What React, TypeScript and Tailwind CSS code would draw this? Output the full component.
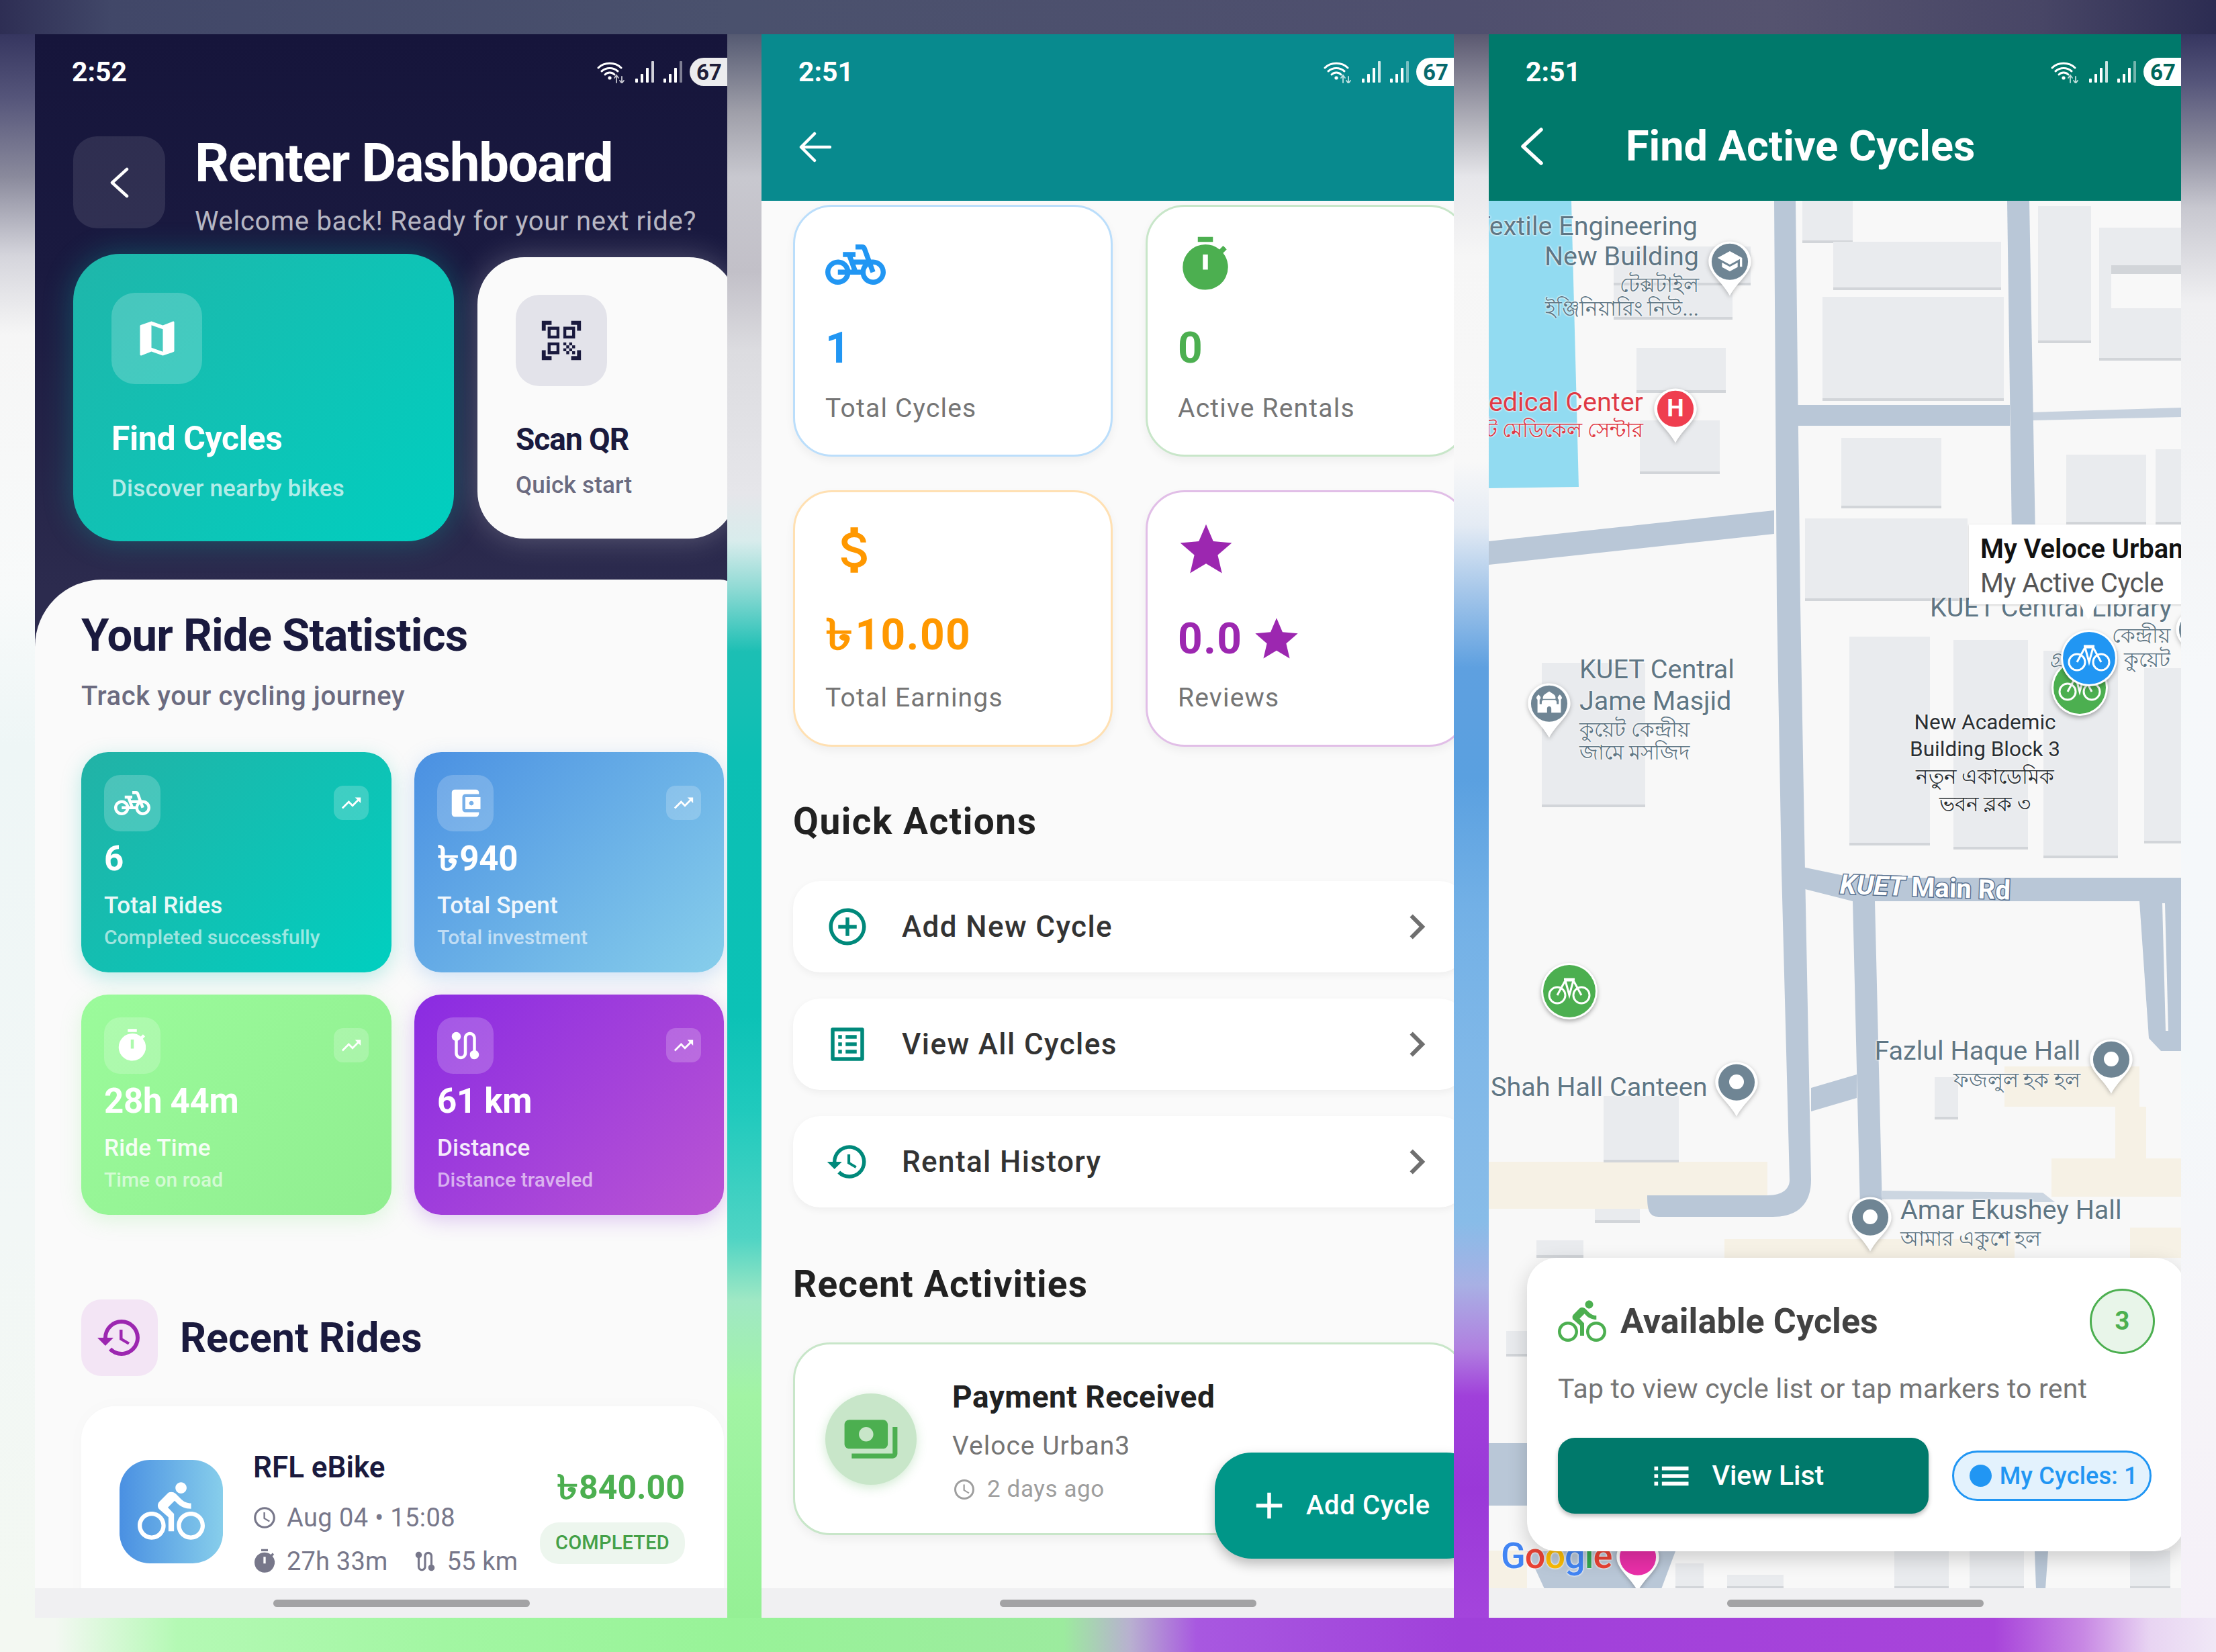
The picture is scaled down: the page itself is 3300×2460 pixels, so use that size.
import React from "react";
import {
  MdAccessTime, MdAccountBalanceWallet, MdAdd, MdAddCircleOutline, MdAttachMoney, MdChevronRight,
  MdDirectionsBike, MdHistory, MdList, MdListAlt, MdMap, MdPayments, MdPedalBike, MdQrCodeScanner,
  MdRoute, MdSchool, MdStar, MdTimer, MdTrendingUp, MdMosque,
} from "react-icons/md";

const Taka = () => <span className="inline-block origin-left scale-x-[1.3] mr-[0.17em]">৳</span>;

const Wifi = () => (
  <svg viewBox="0 0 44 34" className="w-[44px] h-[34px]" fill="none" stroke="white" strokeLinecap="round">
    <path d="M2 11C11 2 27 2 36 11" strokeWidth="3" />
    <path d="M7 16C14 10 24 10 31 16" strokeWidth="3" />
    <path d="M12 21C16 17 22 17 26 21" strokeWidth="3" />
    <circle cx="19" cy="26" r="2.6" fill="white" stroke="none" />
    <path d="M29 33V23M26 26L29 22L32 26" strokeWidth="1.8" opacity="0.75" />
    <path d="M37 24V33M34 30L37 34L40 30" strokeWidth="1.8" opacity="0.75" />
  </svg>
);

const Bars = ({ dim }: { dim?: boolean }) => (
  <svg viewBox="0 0 30 34" className="w-[30px] h-[34px]" fill="white">
    <rect x="1" y="27" width="4" height="6" rx="1" />
    <rect x="9" y="20" width="4" height="13" rx="1" />
    <rect x="17" y="11" width="4" height="22" rx="1" />
    <rect x="25" y="1" width="4" height="32" rx="1" opacity={dim ? 0.45 : 0.8} />
  </svg>
);

const Status = ({ time, pill }: { time: string; pill: string }) => (
  <div className="h-[112px] flex items-center justify-between pl-[55px] shrink-0">
    <span className="text-[41px] font-bold text-white leading-none">{time}</span>
    <div className="flex items-center gap-[12px] -mr-[22px]">
      <Wifi />
      <Bars />
      <Bars dim />
      <div className={`-ml-[2px] w-[78px] h-[42px] rounded-full pl-[10px] flex items-center text-[33px] font-bold leading-none ${pill}`}>67</div>
    </div>
  </div>
);

const Nav = () => (
  <div className="h-[44px] bg-[#f0f0f2] pl-[355px] pt-[17px] shrink-0 relative z-20">
    <div className="w-[382px] h-[11px] rounded-full bg-[#a3a3a5]" />
  </div>
);

const statCards = [
  { Icon: MdPedalBike, value: <>6</>, title: "Total Rides", sub: "Completed successfully", cls: "bg-[linear-gradient(135deg,#22b2a6,#00cfc0)] shadow-[0_8px_30px_rgba(0,190,170,0.25)]" },
  { Icon: MdAccountBalanceWallet, value: <><Taka />940</>, title: "Total Spent", sub: "Total investment", cls: "bg-[linear-gradient(135deg,#4a90e2,#87ceeb)] shadow-[0_8px_30px_rgba(80,150,230,0.25)]" },
  { Icon: MdTimer, value: <>28h 44m</>, title: "Ride Time", sub: "Time on road", cls: "bg-[linear-gradient(135deg,#9bfb9b,#90ee90)] shadow-[0_8px_30px_rgba(140,240,140,0.25)]" },
  { Icon: MdRoute, value: <>61 km</>, title: "Distance", sub: "Distance traveled", cls: "bg-[linear-gradient(135deg,#8a2be2,#ba55d3)] shadow-[0_8px_30px_rgba(140,50,220,0.25)]" },
];

const PhoneOne = () => (
  <div className="w-[1031px] h-[2358px] flex flex-col overflow-hidden shrink-0 bg-[linear-gradient(180deg,#16153b_0%,#1a1a40_15%,#2c2b4e_35%)]">
    <Status time="2:52" pill="bg-[#ececee] text-[#1f1f3a]" />
    <div className="mt-[40px] pl-[57px] flex items-start gap-[44px]">
      <div className="w-[137px] h-[137px] rounded-[35px] bg-white/10 flex items-center justify-center">
        <svg viewBox="0 0 30 46" className="w-[30px] h-[46px]" fill="none" stroke="white" strokeWidth="4.5" strokeLinecap="round" strokeLinejoin="round"><path d="M26 3L4 23L26 43" /></svg>
      </div>
      <div>
        <div className="text-[80px] leading-[80px] font-bold text-white tracking-[-1.5px] whitespace-nowrap">Renter Dashboard</div>
        <div className="mt-[25px] text-[40px] leading-[44px] text-white/70 whitespace-nowrap tracking-[0.7px]">Welcome back! Ready for your next ride?</div>
      </div>
    </div>
    <div className="mt-[26px] pl-[57px] flex items-center gap-[35px]">
      <div className="w-[567px] h-[428px] shrink-0 rounded-[70px] pl-[57px] pt-[58px] bg-[linear-gradient(135deg,#1fb6aa,#00cfc0)] shadow-[0_0_45px_rgba(0,200,180,0.3)]">
        <div className="w-[135px] h-[136px] rounded-[35px] bg-white/20 flex items-center justify-center">
          <MdMap className="text-white text-[68px]" />
        </div>
        <div className="mt-[56px] text-[50px] leading-[50px] font-bold text-white tracking-[-0.4px]">Find Cycles</div>
        <div className="mt-[30px] text-[35px] leading-[40px] font-medium text-white/70 tracking-[0.2px]">Discover nearby bikes</div>
      </div>
      <div className="w-[385px] h-[419px] shrink-0 rounded-[70px] pl-[57px] pt-[56px] bg-[#fafafa] shadow-[0_0_45px_rgba(255,255,255,0.25)]">
        <div className="w-[136px] h-[136px] rounded-[35px] bg-[#e3e3ea] flex items-center justify-center">
          <MdQrCodeScanner className="text-[#1a1a3e] text-[70px]" />
        </div>
        <div className="mt-[54px] text-[46px] leading-[50px] font-bold text-[#1a1a3e] tracking-[-1px]">Scan QR</div>
        <div className="mt-[24px] text-[35px] leading-[40px] font-medium text-[#6b6b80] tracking-[0.2px]">Quick start</div>
      </div>
    </div>
    <div className="mt-[57px] w-[1050px] flex-1 min-h-0 overflow-hidden rounded-tl-[100px] rounded-tr-[30px] bg-[#fafafa] pl-[69px] pt-[48px] relative">
      <div className="text-[67px] leading-[70px] font-bold text-[#1a1a3e] tracking-[-0.8px] whitespace-nowrap">Your Ride Statistics</div>
      <div className="mt-[34px] text-[40px] leading-[44px] font-medium text-[#6b6b80] tracking-[0.6px]">Track your cycling journey</div>
      <div className="mt-[61px] grid grid-cols-[462px_461px] auto-rows-[328px] gap-x-[34px] gap-y-[33px]">
        {statCards.map((c) => (
          <div key={c.title} className={`relative rounded-[40px] pl-[34px] pt-[34px] ${c.cls}`}>
            <div className="w-[84px] h-[84px] rounded-[24px] bg-white/20 flex items-center justify-center">
              <c.Icon className="text-white text-[54px]" />
            </div>
            <div className="mt-[16px] text-[51px] leading-[50px] font-bold text-white whitespace-nowrap tracking-[-0.3px]">{c.value}</div>
            <div className="mt-[26px] text-[35px] leading-[38px] font-medium text-white/90 tracking-[0.2px]">{c.title}</div>
            <div className="mt-[12px] text-[30px] leading-[32px] font-medium text-white/60">{c.sub}</div>
            <div className="absolute right-[34px] top-[50px] w-[52px] h-[51px] rounded-[14px] bg-white/20 flex items-center justify-center">
              <MdTrendingUp className="text-white text-[34px]" />
            </div>
          </div>
        ))}
      </div>
      <div className="mt-[126px] flex items-center gap-[33px]">
        <div className="w-[114px] h-[114px] rounded-[30px] bg-[#f3e5f5] flex items-center justify-center">
          <MdHistory className="text-[#9c27b0] text-[72px]" />
        </div>
        <div className="text-[61px] leading-[70px] font-bold text-[#1a1a3e]">Recent Rides</div>
      </div>
      <div className="mt-[45px] w-[957px] h-[330px] rounded-[50px] bg-white flex items-start pl-[57px] pt-[66px] shadow-[0_0_30px_rgba(0,0,0,0.02)]">
        <div className="mt-[14px] w-[154px] h-[154px] rounded-[45px] flex items-center justify-center bg-[linear-gradient(90deg,#4a90e2,#87ceeb)] shrink-0">
          <MdDirectionsBike className="text-white text-[100px]" />
        </div>
        <div className="ml-[45px] w-[400px]">
          <div className="text-[44px] leading-[50px] font-semibold text-[#1a1a3e]">RFL eBike</div>
          <div className="mt-[28px] flex items-center gap-[16px] text-[38px] leading-[44px] text-[#77778a]">
            <MdAccessTime className="text-[38px] -mx-[2px]" />
            <span className="tracking-[0.4px]">Aug 04 • 15:08</span>
          </div>
          <div className="mt-[21px] flex items-center gap-[16px] text-[38px] leading-[44px] text-[#77778a] whitespace-nowrap">
            <MdTimer className="text-[40px] -mx-[3px]" />
            <span className="tracking-[0.2px]">27h 33m</span>
            <MdRoute className="ml-[20px] text-[38px] -mr-[2px]" />
            <span className="tracking-[0.2px]">55 km</span>
          </div>
        </div>
        <div className="absolute left-[752px] top-[1326px] w-[216px] flex flex-col items-end">
          <div className="text-[50px] leading-[52px] font-bold text-[#4caf50]"><Taka />840.00</div>
          <div className="mt-[26px] w-[216px] h-[62px] rounded-[28px] bg-[#edf6ee] flex items-center justify-center text-[29px] font-medium text-[#43a047] tracking-[0.2px]">COMPLETED</div>
        </div>
      </div>
    </div>
    <Nav />
  </div>
);

const tiles = [
  { border: "border-[#bbdefb]", vm: "mt-[48px]", lm: "mt-[34px]", icon: <MdPedalBike className="text-[#2196f3] text-[90px]" />, value: <span className="text-[#2196f3]">1</span>, label: "Total Cycles" },
  { border: "border-[#c8e6c9]", vm: "mt-[48px]", lm: "mt-[34px]", icon: <MdTimer className="text-[#4caf50] text-[90px] -ml-[4px]" />, value: <span className="text-[#4caf50]">0</span>, label: "Active Rentals" },
  { border: "border-[#ffe0b2]", vm: "mt-[50px]", lm: "mt-[38px]", icon: <MdAttachMoney className="text-[#ff9800] text-[90px]" />, value: <span className="text-[#ff9800]"><Taka />10.00</span>, label: "Total Earnings" },
  { border: "border-[#e1bee7]", vm: "mt-[50px]", lm: "mt-[38px]", icon: <MdStar className="text-[#9c27b0] text-[92px] -ml-[4px]" />, value: <span className="text-[#9c27b0] flex items-center gap-[12px]">0.0 <MdStar className="text-[76px]" /></span>, label: "Reviews" },
];

const actions = [
  { Icon: MdAddCircleOutline, label: "Add New Cycle" },
  { Icon: MdListAlt, label: "View All Cycles" },
  { Icon: MdHistory, label: "Rental History" },
];

const PhoneTwo = () => (
  <div className="relative w-[1031px] h-[2358px] flex flex-col overflow-hidden shrink-0 bg-[#fafafa]">
    <div className="h-[248px] bg-[#088a8e] shrink-0">
      <Status time="2:51" pill="bg-[linear-gradient(90deg,#ffffff_72%,#ffffff99_72%)] text-[#08696c]" />
      <div className="pl-[56px] pt-[33px]">
        <svg viewBox="0 0 48 46" className="w-[48px] h-[46px]" fill="none" stroke="white" strokeWidth="4.5" strokeLinecap="round" strokeLinejoin="round"><path d="M46 23H3M23 3L3 23L23 43" /></svg>
      </div>
    </div>
    <div className="flex-1 min-h-0 pl-[47px] pt-[6px] overflow-hidden">
      <div className="grid grid-cols-[476px_480px] grid-rows-[375px_382px] gap-x-[49px] gap-y-[50px]">
        {tiles.map((t) => (
          <div key={t.label} className={`bg-white border-[3px] rounded-[58px] pl-[45px] pt-[41px] shadow-[0_6px_14px_rgba(0,0,0,0.05)] ${t.border}`}>
            <div className="h-[90px] flex items-center">{t.icon}</div>
            <div className={`${t.vm} h-[64px] text-[64px] leading-[64px] font-bold tracking-[1.5px]`}>{t.value}</div>
            <div className={`${t.lm} text-[39px] leading-[46px] text-[#757575] tracking-[1.2px]`}>{t.label}</div>
          </div>
        ))}
      </div>
      <div className="mt-[81px] text-[55px] leading-[60px] font-bold text-[#212121] tracking-[1.5px]">Quick Actions</div>
      <div className="mt-[59px] flex flex-col gap-[39px]">
        {actions.map((a) => (
          <div key={a.label} className="w-[1003px] h-[136px] rounded-[40px] bg-white flex items-center pl-[48px] pr-[37px] shadow-[0_4px_12px_rgba(0,0,0,0.05)]">
            <a.Icon className="text-[#00897b] text-[66px]" />
            <span className="ml-[48px] flex-1 text-[44px] font-medium text-[#333333] tracking-[1.4px]">{a.label}</span>
            <MdChevronRight className="text-[#6f6f6f] text-[74px]" />
          </div>
        ))}
      </div>
      <div className="mt-[84px] text-[55px] leading-[60px] font-bold text-[#212121] tracking-[1.2px]">Recent Activities</div>
      <div className="mt-[57px] w-[1003px] h-[287px] bg-white border-[3px] border-[#c8e6c9] rounded-[55px] flex items-center pl-[45px] shadow-[0_6px_14px_rgba(0,0,0,0.05)]">
        <div className="w-[136px] h-[136px] rounded-full bg-[#c8e6c9] flex items-center justify-center shadow-[0_4px_16px_rgba(76,175,80,0.25)] shrink-0">
          <MdPayments className="text-[#4caf50] text-[86px]" />
        </div>
        <div className="ml-[53px] pt-[8px]">
          <div className="text-[46px] leading-[52px] font-bold text-[#212121] tracking-[0.5px]">Payment Received</div>
          <div className="mt-[24px] text-[39px] leading-[46px] text-[#757575] tracking-[1px]">Veloce Urban3</div>
          <div className="mt-[20px] flex items-center gap-[16px] text-[35px] leading-[44px] text-[#9e9e9e] tracking-[0.6px]">
            <MdAccessTime className="text-[36px]" />
            2 days ago
          </div>
        </div>
      </div>
    </div>
    <Nav />
    <div className="absolute left-[675px] top-[2112px] w-[400px] h-[158px] rounded-[55px] bg-[#009688] shadow-[0_8px_18px_rgba(0,0,0,0.25)] flex items-center pl-[48px] z-10">
      <MdAdd className="text-white text-[66px]" />
      <span className="ml-[22px] text-[40px] font-medium text-white tracking-[0.6px]">Add Cycle</span>
    </div>
  </div>
);

const Pin = ({ x, y, color, children }: { x: number; y: number; color: string; children?: React.ReactNode }) => (
  <div className="absolute w-[66px] h-[84px]" style={{ left: x - 2217 - 33, top: y - 299 - 31 }}>
    <svg viewBox="0 0 100 127" className="absolute inset-0 w-full h-full drop-shadow-[0_2px_3px_rgba(0,0,0,0.25)]">
      <path d="M50 2C23 2 2 23 2 48C2 74 32 92 50 125C68 92 98 74 98 48C98 23 77 2 50 2Z" fill="white" />
      <circle cx="50" cy="48" r="41" fill={color} />
    </svg>
    <div className="absolute left-0 top-0 w-[66px] h-[62px] flex items-center justify-center text-white">{children}</div>
  </div>
);

const Marker = ({ x, y, color }: { x: number; y: number; color: string }) => (
  <svg viewBox="0 0 88 88" className="absolute w-[88px] h-[88px] drop-shadow-[0_3px_3px_rgba(0,0,0,0.3)]" style={{ left: x - 2217 - 44, top: y - 299 - 44 }}>
    <circle cx="44" cy="44" r="42" fill="white" />
    <circle cx="44" cy="44" r="39" fill={color} />
    <g fill="none" stroke="white" strokeWidth="3">
      <circle cx="26" cy="50" r="12" />
      <circle cx="62" cy="50" r="12" />
      <path d="M26 50L38 28H50L62 50M38 28L44 50L50 28M36 26H52" />
    </g>
  </svg>
);

type LabelT = { x: number; y: number; t: string; a?: "l" | "r" | "c"; s?: number; c?: string };
const grey = "#5f7684";
const labels: LabelT[] = [
  { x: 2528, y: 337, t: "Textile Engineering", a: "r", s: 39.5 },
  { x: 2530, y: 382, t: "New Building", a: "r", s: 39.5 },
  { x: 2530, y: 424, t: "টেক্সটাইল", a: "r", s: 31 },
  { x: 2530, y: 459, t: "ইঞ্জিনিয়ারিং নিউ...", a: "r", s: 31 },
  { x: 2447, y: 599, t: "Medical Center", a: "r", s: 39.5, c: "#df3a46" },
  { x: 2447, y: 640, t: "কুয়েট মেডিকেল সেন্টার", a: "r", s: 31, c: "#df3a46" },
  { x: 2874, y: 905, t: "KUET Central Library", s: 39.5 },
  { x: 3232, y: 946, t: "কেন্দ্রীয়", a: "r", s: 31 },
  { x: 3232, y: 982, t: "কুয়েট", a: "r", s: 31 },
  { x: 3053, y: 982, t: "গ্র", s: 31 },
  { x: 2352, y: 997, t: "KUET Central", s: 39.5 },
  { x: 2352, y: 1044, t: "Jame Masjid", s: 39.5 },
  { x: 2352, y: 1086, t: "কুয়েট কেন্দ্রীয়", s: 31 },
  { x: 2352, y: 1120, t: "জামে মসজিদ", s: 31 },
  { x: 2956, y: 1076, t: "New Academic", a: "c", s: 31.5, c: "#2a2f33" },
  { x: 2956, y: 1116, t: "Building Block 3", a: "c", s: 31.5, c: "#2a2f33" },
  { x: 2956, y: 1156, t: "নতুন একাডেমিক", a: "c", s: 31, c: "#2a2f33" },
  { x: 2956, y: 1197, t: "ভবন ব্লক ৩", a: "c", s: 31, c: "#2a2f33" },
  { x: 3098, y: 1565, t: "Fazlul Haque Hall", a: "r", s: 39.5 },
  { x: 3098, y: 1608, t: "ফজলুল হক হল", a: "r", s: 31 },
  { x: 2220, y: 1619, t: "Shah Hall Canteen", s: 39.5 },
  { x: 2830, y: 1802, t: "Amar Ekushey Hall", s: 39.5 },
  { x: 2830, y: 1844, t: "আমার একুশে হল", s: 31 },
];

const bld: number[][] = [
  [2403, 367, 2607, 425], [2403, 425, 2580, 476], [2437, 518, 2570, 585], [2442, 626, 2561, 706],
  [2684, 299, 2759, 362], [2730, 360, 2980, 432], [2714, 442, 2984, 597], [3035, 307, 3114, 511],
  [3126, 339, 3248, 537], [2742, 652, 2891, 757], [3077, 677, 3196, 781], [3210, 669, 3248, 781],
  [2688, 772, 2930, 895], [2296, 987, 2450, 1202], [2754, 948, 2874, 1259], [2909, 953, 3020, 1265],
  [3043, 969, 3154, 1278], [3193, 995, 3248, 1256], [2881, 1604, 2916, 1667], [2388, 1632, 2500, 1731],
  [2375, 1800, 2442, 1821], [2288, 1847, 2358, 1873], [2243, 1982, 2274, 2020], [2495, 2328, 2537, 2366],
  [2572, 2345, 2656, 2366], [2821, 2309, 2902, 2366], [2933, 2309, 3014, 2366], [3172, 2309, 3232, 2366],
];

const MapSvg = () => (
  <svg viewBox="2217 299 1031 2067" className="absolute inset-0 w-[1031px] h-[2067px]">
    <rect x="2217" y="299" width="1031" height="2067" fill="#f8f8f8" />
    <path d="M2217 299H2340L2351 725L2217 727Z" fill="#92dbf1" />
    <g fill="#f6f1e5">
      <path d="M2217 1730H2632V1800H2217Z" />
      <path d="M2985 1588H3186V1648H2985Z" />
      <path d="M3055 1725H3248V1782H3055Z" />
      <path d="M3150 1648H3196V1725H3150Z" />
      <path d="M2568 1845H3000V1873H2568Z" />
      <path d="M3172 1828H3248V1873H3172Z" />
      <path d="M2217 2309H2274V2366H2217Z" />
    </g>
    {bld.map((b, i) => (
      <g key={i}>
        <rect x={b[0]} y={b[1]} width={b[2] - b[0]} height={b[3] - b[1]} fill="#e9ebee" />
        <rect x={b[0]} y={b[3] - 4} width={b[2] - b[0]} height={4} fill="#d2d5d9" />
      </g>
    ))}
    <rect x="3144" y="408" width="104" height="51" fill="#f8f8f8" />
    <rect x="3144" y="395" width="104" height="13" fill="#d2d5d9" />
    <g fill="#b9c7d7">
      <path d="M2642 299H2674L2681 900L2688 1297L2697 1757C2697 1792 2678 1812 2640 1812H2470C2455 1812 2453 1800 2453 1780H2632C2655 1780 2665 1770 2665 1757L2653 1297L2646 900Z" />
      <path d="M2989 299H3022L3031 800H2996Z" />
      <path d="M2674 603H2993V634H2674Z" />
      <path d="M3027 614L3248 607V621L3027 626Z" opacity="0.8" />
      <path d="M2217 806L2642 760V795L2217 841Z" />
      <path d="M2684 1291L2761 1307H3248V1342H2792L2803 1800H2770L2759 1342L2684 1323Z" />
      <path d="M2697 1620L2765 1600V1635L2697 1655Z" />
      <path d="M3186 1342H3248V1565H3218L3200 1546Z" />
      <path d="M2803 1773L3042 1776L3060 1790H3030L3020 1786L2803 1786Z" opacity="0.7" />
      <path d="M2274 2149H2217V2242H2274Z" />
      <path d="M2274 2310H2495L2474 2366H2300Z" />
      <path d="M3030 2310H3050L3046 2366H3032Z" />
    </g>
    <path d="M3222 1345L3227 1535" stroke="#f8f8f8" strokeWidth="4" />
  </svg>
);

const PhoneThree = () => (
  <div className="relative w-[1031px] h-[2358px] flex flex-col overflow-hidden shrink-0 bg-[#f8f8f8]">
    <div className="h-[248px] bg-[#00796b] shrink-0 relative z-10">
      <Status time="2:51" pill="bg-[linear-gradient(90deg,#ffffff_72%,#ffffff99_72%)] text-[#00665a]" />
      <div className="h-[112px] -mt-[1px] flex items-center pl-[46px]">
        <svg viewBox="0 0 36 58" className="w-[36px] h-[58px]" fill="none" stroke="white" strokeWidth="5.5" strokeLinecap="round" strokeLinejoin="round"><path d="M32 4L5 29L32 54" /></svg>
        <div className="ml-[122px] text-[63px] font-bold leading-[70px] text-white">Find Active Cycles</div>
      </div>
    </div>
    <div className="relative flex-1 min-h-0 overflow-hidden">
      <MapSvg />
      {labels.map((l) => (
        <div
          key={l.t + l.y}
          className="absolute whitespace-nowrap leading-none [text-shadow:0_0_3px_white,0_0_3px_white]"
          style={{
            left: l.x - 2217,
            top: l.y - 299,
            fontSize: l.s,
            color: l.c ?? grey,
            transform: `translate(${l.a === "r" ? "-100%" : l.a === "c" ? "-50%" : "0"},-50%)`,
          }}
        >
          {l.t}
        </div>
      ))}
      <div className="absolute left-[523px] top-[1003px] rotate-[2deg] text-[40px] leading-none font-bold text-white whitespace-nowrap [-webkit-text-stroke:3px_#5a7290] [paint-order:stroke_fill]"><span className="italic">KUET</span> Main Rd</div>
      <Pin x={2576} y={389} color="#6f8594"><MdSchool className="text-[40px]" /></Pin>
      <Pin x={2495} y={608} color="#ef3e4f"><span className="text-[36px] font-bold leading-none">H</span></Pin>
      <Pin x={2307} y={1047} color="#6f8594"><MdMosque className="text-[38px]" /></Pin>
      <Pin x={3144} y={1577} color="#6f8594"><span className="w-[22px] h-[22px] rounded-full bg-white" /></Pin>
      <Pin x={2586} y={1611} color="#6f8594"><span className="w-[22px] h-[22px] rounded-full bg-white" /></Pin>
      <Pin x={2785} y={1812} color="#6f8594"><span className="w-[22px] h-[22px] rounded-full bg-white" /></Pin>
      <Pin x={2439} y={2318} color="#e92fa8" />
      <Pin x={3272} y={937} color="#6f8594" />
      <Marker x={3097} y={1024} color="#4caf50" />
      <Marker x={3111} y={980} color="#2196f3" />
      <Marker x={2337} y={1476} color="#4caf50" />
      <div className="absolute left-[715px] top-[482px] w-[340px] h-[119px] bg-white pl-[17px] pt-[13px] overflow-hidden shadow-[0_1px_3px_rgba(0,0,0,0.2)]">
        <div className="text-[40px] leading-[48px] font-semibold text-[#111] whitespace-nowrap tracking-[-0.1px]">My Veloce Urban3</div>
        <div className="mt-[3px] text-[40px] leading-[48px] text-[#555] whitespace-nowrap tracking-[-0.5px]">My Active Cycle</div>
      </div>
      <div className="absolute left-[880px] top-[600px] w-0 h-0 border-x-[13px] border-x-transparent border-t-[24px] border-t-white" />
      <div className="absolute left-[18px] top-[1991px] flex text-[54px] leading-none font-medium tracking-[-1px] [text-shadow:0_0_3px_white,0_0_3px_white]">
        <span className="text-[#4285f4]">G</span><span className="text-[#ea4335]">o</span><span className="text-[#fbbc05]">o</span><span className="text-[#4285f4]">g</span><span className="text-[#34a853]">l</span><span className="text-[#ea4335]">e</span>
      </div>
      <div className="absolute left-[57px] top-[1574px] w-[980px] h-[437px] rounded-[45px] bg-white pl-[46px] pr-[50px] shadow-[0_10px_30px_rgba(0,0,0,0.18)]">
        <div className="h-[142px] pt-[47px] flex items-center">
          <MdDirectionsBike className="text-[#4caf50] text-[72px]" />
          <span className="ml-[21px] text-[52px] font-bold text-[#424242] leading-[60px] tracking-[0.1px]">Available Cycles</span>
          <div className="ml-auto -mr-[5px] w-[97px] h-[97px] rounded-full border-[3px] border-[#4caf50] bg-[#e8f5e9] flex items-center justify-center text-[38px] font-bold text-[#4caf50]">3</div>
        </div>
        <div className="mt-[29px] text-[41px] leading-[48px] text-[#757575] whitespace-nowrap tracking-[0.2px]">Tap to view cycle list or tap markers to rent</div>
        <div className="mt-[49px] flex items-center">
          <div className="w-[557px] h-[113px] rounded-[25px] bg-[#00796b] shadow-[0_4px_6px_rgba(0,0,0,0.25)] flex items-center justify-center gap-[26px] text-white pr-[20px]">
            <MdList className="text-[68px]" />
            <span className="text-[41px] font-medium">View List</span>
          </div>
          <div className="ml-[35px] w-[300px] h-[75px] rounded-full border-[3px] border-[#2196f3] bg-[#e3f2fd] flex items-center pl-[23px] gap-[12px] text-[#2196f3]">
            <span className="w-[33px] h-[33px] rounded-full bg-[#2196f3]" />
            <span className="text-[36px] font-medium tracking-[0.2px] whitespace-nowrap">My Cycles: 1</span>
          </div>
        </div>
      </div>
    </div>
    <Nav />
  </div>
);

export default function App() {
  return (
    <div className="w-[3300px] h-[2460px] overflow-hidden flex flex-col font-['Roboto','Noto_Sans','DejaVu_Sans',sans-serif]">
      <div className="h-[51px] shrink-0 bg-[linear-gradient(90deg,#2e2e54_0%,#414768_5%,#4a516d_33%,#4f4f6e_66%,#55536f_80%,#484666_92%,#2c2c52_100%)]" />
      <div className="h-[2358px] flex shrink-0">
        <div className="w-[52px] shrink-0 bg-[linear-gradient(180deg,#363660_0%,#55557a_4%,#8a8a9c_9%,#d5d5dc_14%,#f6f6f6_19%,#f8fafa_35%,#eef6f6_45%,#f2f7f6_75%,#f3f8f2_100%)]" />
        <PhoneOne />
        <div className="w-[51px] shrink-0 bg-[linear-gradient(180deg,#555a72_0%,#a0a0aa_5%,#c8c8cf_9%,#c2c0c8_15%,#dcdce0_20%,#e6e6ea_29%,#d8ecec_32%,#8fdad4_35%,#1cbfb4_39%,#0cbfb4_46%,#0cc2b6_62%,#20cabd_68%,#4fd4c4_76%,#a0e8c4_80%,#a2f4a4_86%,#95f095_100%)]" />
        <PhoneTwo />
        <div className="w-[52px] shrink-0 bg-[linear-gradient(180deg,#5a5870_0%,#b8b8c0_6%,#e6e6ea_9%,#f6f6f6_14%,#f8f8f8_27%,#e4ebf4_31%,#a8c8ea_35%,#5ea0e0_40%,#5aa0e0_47%,#72b0e6_55%,#80b8e8_65%,#88bce8_75%,#a8b0e4_79%,#b080e0_83%,#a040da_86%,#9a38d8_92%,#a444dc_100%)]" />
        <PhoneThree />
        <div className="w-[52px] shrink-0 bg-[linear-gradient(180deg,#363660_0%,#55557a_3%,#8a8a9c_7%,#c8c8d0_11%,#f0f0f2_17%,#f6f8fa_40%,#f4f8fa_65%,#f6f4f8_85%,#f5f0f8_100%)]" />
      </div>
      <div className="h-[51px] shrink-0 bg-[linear-gradient(90deg,#f3f8f2_0%,#f3f8f2_2.5%,#b4f9b4_8%,#a2f6a2_20%,#98f398_33%,#9ceb9e_48%,#b8b0d0_51%,#a858e0_54%,#a040da_66%,#a844da_90%,#c888e4_94%,#e8d4f2_97%,#f0e8f6_100%)]" />
    </div>
  );
}
